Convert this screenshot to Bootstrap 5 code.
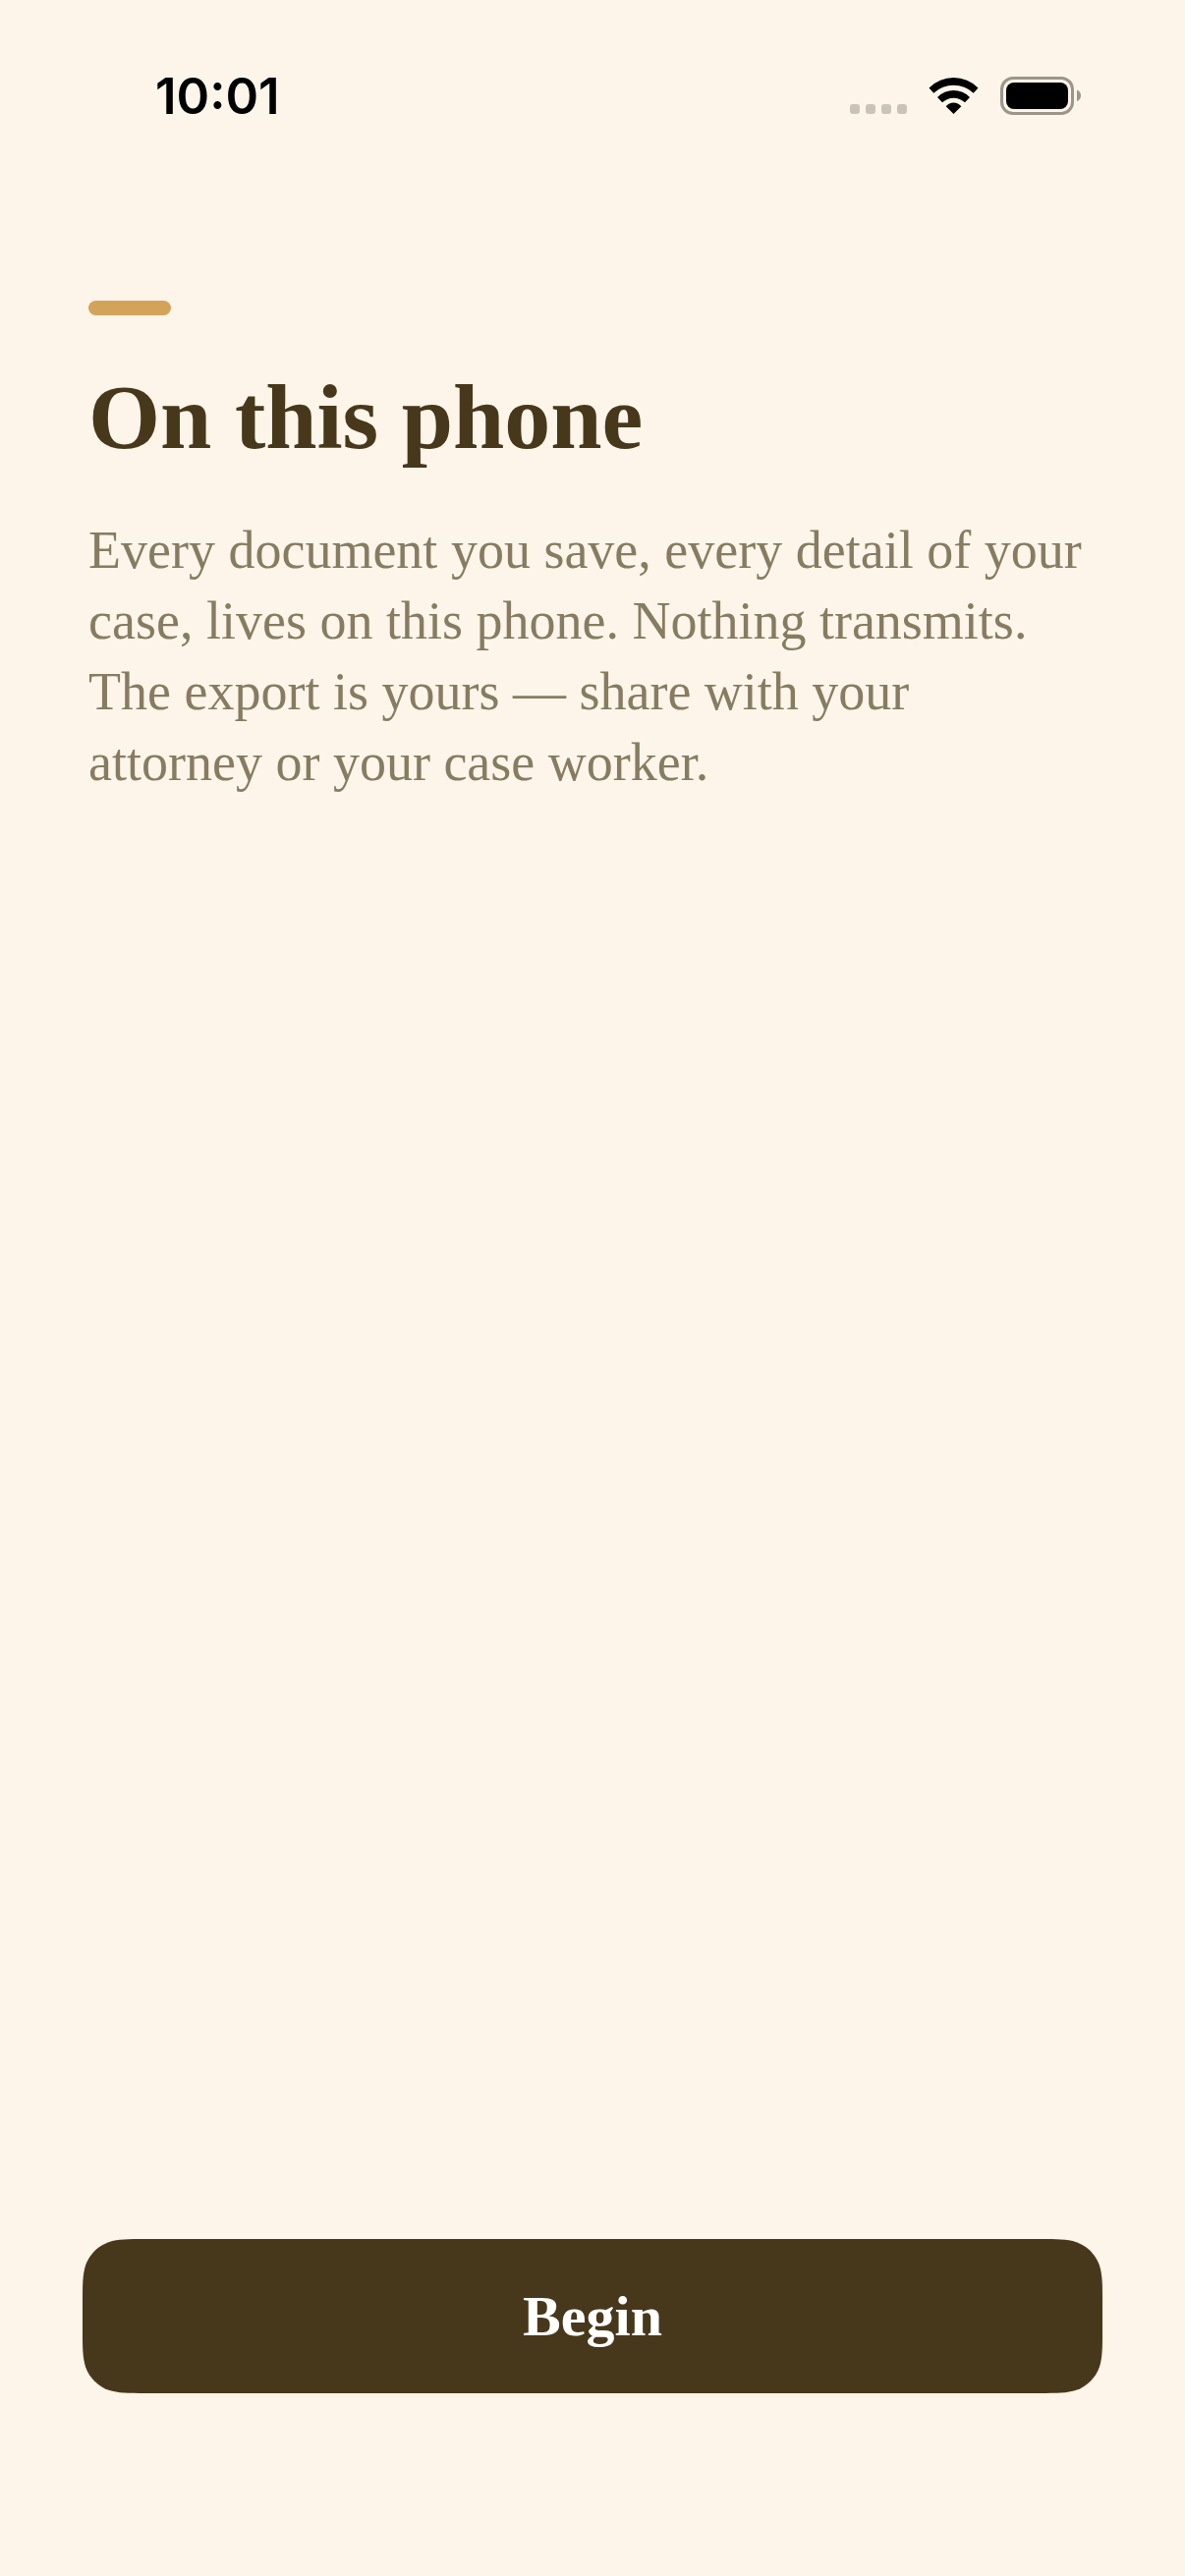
<!DOCTYPE html>
<html lang="en">
<head>
<meta charset="utf-8">
<meta name="viewport" content="width=device-width, initial-scale=1">
<title>On this phone</title>
<link href="https://cdn.jsdelivr.net/npm/bootstrap@5.3.0/dist/css/bootstrap.min.css" rel="stylesheet">
<style>
  :root { --cream: #fdf5e9; --umber: #48381b; --taupe: #877c61; --honey: #d4a35a; }
  body { background: var(--cream); color: var(--umber); font-family: "Liberation Serif", "Times New Roman", serif; }
  .status-strip { height: 156px; padding: 68px 104px 0 158px; color: #000; }
  .status-clock { font: 600 51px/60px Inter, sans-serif; }
  .onboarding { padding: 150px 96px 0 90px; }
  .accent-rule { width: 84px; height: 15px; border-radius: 8px; background: var(--honey); }
  .headline { margin: 47px 0 0; font-size: 94px; line-height: 112px; font-weight: 700; }
  .explainer { margin: 44px 0 0; font-size: 54px; line-height: 72px; color: var(--taupe); }
  .action-bar { padding: 0 84px 186px; }
  /* Continuous-curvature corners: a nine-slice of one rounded tile */
  .btn-begin, .btn-begin:hover, .btn-begin:active {
    --bs-btn-color: #fff; --bs-btn-hover-color: #fff; --bs-btn-active-color: #fff;
    --bs-btn-bg: transparent; --bs-btn-hover-bg: transparent; --bs-btn-active-bg: transparent;
    border: 1px solid transparent;
    border-image: url("data:image/svg+xml,%3Csvg xmlns='http://www.w3.org/2000/svg' width='160' height='160' viewBox='0 0 160 160'%3E%3Cpath fill='%2348381b' d='M64.2 0H95.8C114.300 0 123.500 0 133.500 3.150C144.340 7.100 152.900 15.660 156.850 26.500C160 36.500 160 45.700 160 64.200V95.800C160 114.300 160 123.500 156.850 133.500C152.900 144.340 144.340 152.900 133.500 156.850C123.500 160 114.300 160 95.800 160H64.200C45.700 160 36.500 160 26.500 156.850C15.660 152.900 7.100 144.340 3.150 133.500C0 123.500 0 114.300 0 95.800V64.200C0 45.700 0 36.500 3.150 26.500C7.100 15.660 15.660 7.100 26.500 3.150C36.500 0 45.700 0 64.200 0Z'/%3E%3C/svg%3E") 70 fill / 70px stretch;
    height: 157px; font-size: 58px; line-height: 68px; font-weight: 700;
  }
</style>
<script src="https://cdn.jsdelivr.net/npm/bootstrap@5.3.0/dist/js/bootstrap.bundle.min.js" defer></script>
</head>
<body class="d-flex flex-column min-vh-100">
  <header class="status-strip d-flex justify-content-between align-items-start">
    <time class="status-clock" datetime="10:01">10:01</time>
    <svg width="240" height="60" viewBox="862 68 240 60" role="img" aria-label="No signal, Wi-Fi on, battery full">
      <g fill="#c9c3ba">
        <rect x="865" y="106" width="10" height="10" rx="3"/>
        <rect x="881" y="106" width="10" height="10" rx="3"/>
        <rect x="897" y="106" width="10" height="10" rx="3"/>
        <rect x="913" y="106" width="10" height="10" rx="3"/>
      </g>
      <path d="M945.5 89.500A35 35 0 0 1 995.500 89.500L990.700 94.800A29.500 29.500 0 0 0 950.300 94.800Z"/>
      <path d="M954 99A23 23 0 0 1 987 99L982 104.300A16.500 16.500 0 0 0 959 104.300Z"/>
      <path d="M962.700 108.300A10 10 0 0 1 978.300 108.300L970.500 116Z"/>
      <rect x="1019.500" y="79.500" width="72" height="36" rx="11.500" fill="none" stroke="#9b958c" stroke-width="3"/>
      <rect x="1024" y="84" width="63" height="27" rx="8"/>
      <path d="M1096 91.500Q1100 93 1100 97.200Q1100 101.500 1096 103Z" fill="#9b958c"/>
    </svg>
  </header>
  <main class="onboarding flex-grow-1">
    <div class="accent-rule"></div>
    <h1 class="headline">On this phone</h1>
    <p class="explainer">Every document you save, every detail of your case, lives on this phone. Nothing transmits. The export is yours — share with your attorney or your case worker.</p>
  </main>
  <footer class="action-bar">
    <button type="button" class="btn btn-begin w-100">Begin</button>
  </footer>
</body>
</html>
